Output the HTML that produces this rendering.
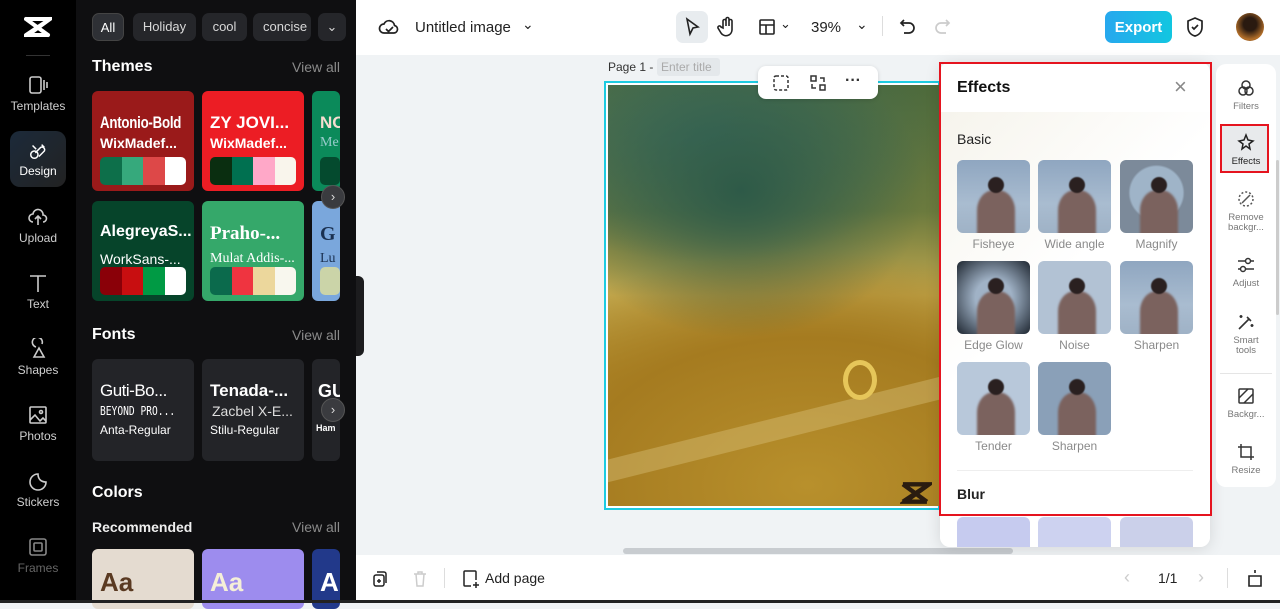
<!DOCTYPE html>
<html><head><meta charset="utf-8"><style>
*{box-sizing:border-box;margin:0;padding:0}
body{width:1280px;height:603px;overflow:hidden;font-family:"Liberation Sans",sans-serif;background:#f0f3f5;position:relative}
.abs{position:absolute}
.rail{left:0;top:0;width:76px;height:603px;background:#000}
.ri{position:absolute;left:0;width:76px;text-align:center;color:#cfcfcf;font-size:12px}
.ri svg{display:block;margin:0 auto 3px}
.panel{left:76px;top:0;width:280px;height:603px;background:#0f0f11;color:#fff}
.chip{position:absolute;top:13px;height:28px;border-radius:7px;background:#25262a;color:#d8d8d8;font-size:13px;line-height:28px;text-align:center}
.h{position:absolute;font-weight:bold;font-size:16px;color:#fff}
.va{position:absolute;right:16px;font-size:14px;color:#8a8a8a}
.card{position:absolute;width:102px;height:100px;border-radius:6px;overflow:hidden}
.card .t{position:absolute;left:8px;top:22px;font-weight:bold;font-size:17px;white-space:nowrap}
.card .s{position:absolute;left:8px;top:50px;font-size:14px;white-space:nowrap}
.sw{position:absolute;left:8px;top:66px;width:86px;height:28px;border-radius:5px;overflow:hidden;display:flex}
.sw i{flex:1}
.fc{position:absolute;top:359px;width:102px;height:102px;border-radius:6px;background:#232428;color:#fff;overflow:hidden}
.fc div{white-space:nowrap}
.arrow{position:absolute;width:24px;height:24px;border-radius:50%;background:#3a3b3f;border:1px solid #555;color:#ddd;font-size:13px;text-align:center;line-height:22px}
.top{left:356px;top:0;width:924px;height:55px;background:#fff}
.bot{left:356px;top:555px;width:924px;height:45px;background:#fff}
.thumb{position:absolute;width:73px;height:73px;border-radius:6px;overflow:hidden;background:linear-gradient(180deg,#8fa6c0,#a9bcd0 60%,#9fb2c6)}
.thumb:after{content:"";position:absolute;left:20px;top:30px;width:38px;height:45px;border-radius:45% 45% 0 0;background:#7b625e;filter:blur(1px)}
.thumb:before{content:"";position:absolute;left:31px;top:17px;width:16px;height:16px;border-radius:50%;background:#2a2020;z-index:2;filter:blur(.5px)}
.lbl{position:absolute;width:73px;text-align:center;font-size:12px;color:#8a8a8a}
.rr{position:absolute;left:1216px;width:60px;text-align:center;font-size:9.5px;color:#777;line-height:10px}
.rr svg{display:block;margin:0 auto 4px}
</style></head><body>
<div class="abs rail">
  <svg class="abs" style="left:24px;top:16px" width="28" height="22" viewBox="0 0 28 22"><path d="M2 3 L26 3 L4 19 L24 19 M2 19 L26 3 M2 3 L24 19" stroke="#fff" stroke-width="4" fill="none" stroke-linecap="round"/></svg>
  <div class="abs" style="left:26px;top:55px;width:24px;height:1px;background:#333"></div>
  <div class="ri" style="top:74px"><svg width="22" height="22" viewBox="0 0 22 22" fill="none" stroke="#ccc" stroke-width="1.6"><rect x="3" y="3" width="11" height="16" rx="2"/><path d="M17 6v10M20 8v6"/></svg>Templates</div>
  <div class="abs" style="left:10px;top:131px;width:56px;height:56px;border-radius:10px;background:linear-gradient(135deg,#1c2a3a,#222)"></div>
  <div class="ri" style="top:141px;color:#fff"><svg width="22" height="20" viewBox="0 0 22 22" fill="none" stroke="#fff" stroke-width="1.6"><circle cx="7" cy="15" r="4"/><path d="M5 5l4 4M12 17l6-6a3 3 0 0 0-4-4l-6 6M15 4l3 3"/></svg>Design</div>
  <div class="ri" style="top:206px"><svg width="22" height="22" viewBox="0 0 22 22" fill="none" stroke="#ccc" stroke-width="1.6"><path d="M6 16a4 4 0 0 1 0-8 5 5 0 0 1 10 1 3.5 3.5 0 0 1 0 7M11 19v-8M8 13l3-3 3 3"/></svg>Upload</div>
  <div class="ri" style="top:272px"><svg width="22" height="22" viewBox="0 0 22 22" fill="none" stroke="#ccc" stroke-width="1.6"><path d="M3 4h16M11 4v16"/></svg>Text</div>
  <div class="ri" style="top:338px"><svg width="22" height="22" viewBox="0 0 22 22" fill="none" stroke="#ccc" stroke-width="1.6"><path d="M9 9 a5 5 0 1 1 6-3M7 19l5-9 5 9z"/></svg>Shapes</div>
  <div class="ri" style="top:404px"><svg width="22" height="22" viewBox="0 0 22 22" fill="none" stroke="#ccc" stroke-width="1.6"><rect x="3" y="3" width="16" height="16" rx="1"/><path d="M3 16l5-5 5 6 3-3 3 3"/><circle cx="14" cy="8" r="1.5"/></svg>Photos</div>
  <div class="ri" style="top:470px"><svg width="22" height="22" viewBox="0 0 22 22" fill="none" stroke="#ccc" stroke-width="1.6"><path d="M19 12a8 8 0 1 1-8-8c0 5 3 8 8 8z"/></svg>Stickers</div>
  <div class="ri" style="top:536px;color:#666"><svg width="22" height="22" viewBox="0 0 22 22" fill="none" stroke="#888" stroke-width="1.6"><rect x="3" y="3" width="16" height="16" rx="2"/><rect x="7" y="7" width="8" height="8" rx="1"/></svg>Frames</div>
</div>

<div class="abs panel">
  <div class="chip" style="left:16px;width:32px;background:#2e3035;border:1px solid #444;color:#fff">All</div>
  <div class="chip" style="left:57px;width:63px">Holiday</div>
  <div class="chip" style="left:126px;width:45px">cool</div>
  <div class="chip" style="left:177px;width:58px;text-align:left;padding-left:10px;overflow:hidden">concise</div>
  <div class="chip" style="left:242px;width:28px">⌄</div>
  <div class="h" style="left:16px;top:58px">Themes</div><div class="va" style="top:59px">View all</div>
  <div class="card" style="left:16px;top:91px;background:#9a1a1a;color:#fff"><div class="t" style="font-size:17px;transform:scaleX(.78);transform-origin:left;letter-spacing:-.3px">Antonio-Bold</div><div class="s" style="top:44px;font-weight:bold">WixMadef...</div><div class="sw"><i style="background:#0d6f4a"></i><i style="background:#36a97c"></i><i style="background:#dd4848"></i><i style="background:#fff"></i></div></div>
  <div class="card" style="left:126px;top:91px;background:#ec1d24;color:#fff"><div class="t">ZY JOVI...</div><div class="s" style="top:44px;font-weight:bold">WixMadef...</div><div class="sw"><i style="background:#0a2e10"></i><i style="background:#007050"></i><i style="background:#ffa8c8"></i><i style="background:#f9f5ec"></i></div></div>
  <div class="card" style="left:236px;top:91px;width:28px;background:#0b8a5a;color:#f5ddd0"><div class="t">NO</div><div class="s" style="top:44px;font-family:serif;color:#9cc">Me</div><div class="sw" style="width:20px"><i style="background:#044a2e"></i></div></div>
  <div class="card" style="left:16px;top:201px;background:#06442a;color:#fff"><div class="t" style="font-size:16px">AlegreyaS...</div><div class="s">WorkSans-...</div><div class="sw"><i style="background:#8a0008"></i><i style="background:#c80e10"></i><i style="background:#009a44"></i><i style="background:#fff"></i></div></div>
  <div class="card" style="left:126px;top:201px;background:#35a86a;color:#fff"><div class="t" style="font-family:'Liberation Serif',serif;font-size:19px">Praho-...</div><div class="s" style="font-family:'Liberation Serif',serif">Mulat Addis-...</div><div class="sw"><i style="background:#0b6a4c"></i><i style="background:#ef3440"></i><i style="background:#ecd79c"></i><i style="background:#f8f7ee"></i></div></div>
  <div class="card" style="left:236px;top:201px;width:28px;background:#7aa7dc;color:#1a3050"><div class="t" style="font-family:serif;font-size:20px">G</div><div class="s" style="font-family:serif">Lu</div><div class="sw" style="width:20px"><i style="background:#cbd4a8"></i></div></div>
  <div class="arrow" style="left:245px;top:185px">›</div>
  <div class="h" style="left:16px;top:326px">Fonts</div><div class="va" style="top:327px">View all</div>
  <div class="fc" style="left:16px"><div style="position:absolute;left:8px;top:22px;font-size:17px;letter-spacing:-.5px">Guti-Bo...</div><div style="position:absolute;left:8px;top:45px;font-size:12px;font-family:'DejaVu Sans Mono',monospace;transform:scaleX(.8);transform-origin:left">BEYOND PRO...</div><div style="position:absolute;left:8px;top:64px;font-size:12px">Anta-Regular</div></div>
  <div class="fc" style="left:126px"><div style="position:absolute;left:8px;top:22px;font-size:17px;font-weight:bold">Tenada-...</div><div style="position:absolute;left:10px;top:44px;font-size:14px;color:#ddd">Zacbel X-E...</div><div style="position:absolute;left:8px;top:64px;font-size:12px">Stilu-Regular</div></div>
  <div class="fc" style="left:236px;width:28px"><div style="position:absolute;left:6px;top:22px;font-size:18px;font-weight:bold">GU</div><div style="position:absolute;left:4px;top:64px;font-size:9px;font-weight:bold">Ham</div></div>
  <div class="arrow" style="left:245px;top:398px">›</div>
  <div class="h" style="left:16px;top:484px">Colors</div>
  <div style="position:absolute;left:16px;top:519px;font-size:14px;font-weight:bold;color:#eee">Recommended</div><div class="va" style="top:519px">View all</div>
  <div class="card" style="left:16px;top:549px;height:60px;background:#e4dbd0;color:#5a3a22"><div class="t" style="top:18px;font-size:26px">Aa</div></div>
  <div class="card" style="left:126px;top:549px;height:60px;background:#9d8cee;color:#f5efd8"><div class="t" style="top:18px;font-size:26px">Aa</div></div>
  <div class="card" style="left:236px;top:549px;width:28px;height:60px;background:#22398a;color:#fff"><div class="t" style="top:18px;font-size:26px">A</div></div>
</div>
<div class="abs" style="left:356px;top:276px;width:8px;height:80px;background:#1c1c1e;border-radius:0 6px 6px 0"></div>

<div class="abs top">
  <svg class="abs" style="left:22px;top:17px" width="22" height="20" viewBox="0 0 22 20" fill="none" stroke="#222" stroke-width="1.7"><path d="M6 16a4.5 4.5 0 0 1 0-9 5.5 5.5 0 0 1 10.5 1.5A3.8 3.8 0 0 1 16 16zM8 12l2.5 2.5L15 10"/></svg>
  <div class="abs" style="left:59px;top:19px;font-size:15px;color:#222">Untitled image</div>
  <div class="abs" style="left:166px;top:16px;font-size:14px;color:#222">⌄</div>
  <div class="abs" style="left:320px;top:11px;width:32px;height:32px;border-radius:7px;background:#e8ecef"></div>
  <svg class="abs" style="left:327px;top:17px" width="18" height="20" viewBox="0 0 18 20" fill="none" stroke="#222" stroke-width="1.6"><path d="M4 2l11 8-5 1-3 6z"/></svg>
  <svg class="abs" style="left:361px;top:16px" width="20" height="22" viewBox="0 0 20 22" fill="none" stroke="#222" stroke-width="1.6"><path d="M6 12V5a1.5 1.5 0 0 1 3 0v5V3a1.5 1.5 0 0 1 3 0v7V5a1.5 1.5 0 0 1 3 0v9a6 6 0 0 1-11 3l-3-5a1.5 1.5 0 0 1 3-1z"/></svg>
  <svg class="abs" style="left:402px;top:18px" width="18" height="18" viewBox="0 0 18 18" fill="none" stroke="#222" stroke-width="1.6"><rect x="2" y="2" width="14" height="14" rx="1"/><path d="M2 7h14M8 7v9"/></svg>
  <div class="abs" style="left:424px;top:16px;font-size:13px;color:#222">⌄</div>
  <div class="abs" style="left:455px;top:19px;font-size:15px;color:#222">39%</div>
  <div class="abs" style="left:500px;top:16px;font-size:14px;color:#222">⌄</div>
  <div class="abs" style="left:526px;top:16px;width:1px;height:20px;background:#ddd"></div>
  <svg class="abs" style="left:543px;top:17px" width="18" height="20" viewBox="0 0 18 20" fill="none" stroke="#222" stroke-width="1.7"><path d="M5 3L2 6l3 3M2 6h8a5 5 0 0 1 0 10H5"/></svg>
  <svg class="abs" style="left:577px;top:17px" width="18" height="20" viewBox="0 0 18 20" fill="none" stroke="#ccc" stroke-width="1.7"><path d="M13 3l3 3-3 3M16 6H8a5 5 0 0 0 0 10h5"/></svg>
  <div class="abs" style="left:749px;top:11px;width:67px;height:32px;border-radius:7px;background:linear-gradient(90deg,#27a8ee,#12c6e0);color:#fff;font-weight:bold;font-size:15px;display:flex;align-items:center;justify-content:center">Export</div>
  <svg class="abs" style="left:830px;top:16px" width="18" height="22" viewBox="0 0 18 22" fill="none" stroke="#222" stroke-width="1.7"><path d="M9 2l7 3v6c0 5-3 8-7 9-4-1-7-4-7-9V5zM6 11l2 2 4-4"/></svg>
  <div class="abs" style="left:880px;top:13px;width:28px;height:28px;border-radius:50%;background:radial-gradient(circle at 50% 40%,#2a1a10 30%,#b4702a 70%,#5a3010)"></div>
</div>

<!-- canvas -->
<div class="abs" style="left:608px;top:60px;font-size:12px;color:#333">Page 1 -</div>
<div class="abs" style="left:657px;top:58px;width:63px;height:18px;background:#e4e8eb;border-radius:3px;font-size:12px;color:#aaa;padding:2px 4px">Enter title</div>
<div class="abs" style="left:604px;top:81px;width:336px;height:429px;border:2px solid #1ecbe1;background:#fff"></div>
<div class="abs" style="left:608px;top:85px;width:332px;height:421px;overflow:hidden;background:
radial-gradient(ellipse 55% 35% at 40% 25%,#2e5a48,rgba(46,90,72,0) 100%),
radial-gradient(ellipse 70% 30% at 30% 12%,#3f6d5c,rgba(63,109,92,0) 100%),
radial-gradient(ellipse 140% 70% at 60% 95%,#b8902c,#a57b20 50%,rgba(165,123,32,0) 80%),
linear-gradient(180deg,#4d6a3c 0%,#6b7a3e 30%,#c2a84e 50%,#b08a2a 70%,#c49a36 100%)">
  <div style="position:absolute;left:-20px;top:330px;width:400px;height:22px;transform:rotate(-14deg);background:rgba(225,205,140,.35)"></div>
  <div style="position:absolute;left:235px;top:275px;width:34px;height:40px;border:5px solid #e6c65a;border-radius:50%"></div>
</div>
<svg class="abs" style="left:900px;top:481px" width="32" height="24" viewBox="0 0 28 22"><path d="M2 3 L26 3 L4 19 L24 19 M2 19 L26 3 M2 3 L24 19" stroke="#2a1c10" stroke-width="4" fill="none"/></svg>
<div class="abs" style="left:758px;top:66px;width:120px;height:33px;background:#fff;border-radius:8px;box-shadow:0 1px 4px rgba(0,0,0,.15)"></div>
<svg class="abs" style="left:772px;top:74px" width="18" height="18" viewBox="0 0 18 18" fill="none" stroke="#333" stroke-width="1.5" stroke-dasharray="3 2"><rect x="2" y="2" width="14" height="14" rx="2"/></svg>
<svg class="abs" style="left:809px;top:74px" width="18" height="18" viewBox="0 0 18 18" fill="none" stroke="#333" stroke-width="1.5"><rect x="2" y="2" width="5" height="5"/><rect x="11" y="11" width="5" height="5"/><path d="M11 4h4v4M7 14H3v-4"/></svg>
<div class="abs" style="left:845px;top:72px;font-size:16px;font-weight:bold;color:#333">···</div>
<div class="abs" style="left:623px;top:548px;width:390px;height:6px;border-radius:3px;background:#c8ccd0"></div>

<!-- effects panel -->
<div class="abs" style="left:940px;top:62px;width:270px;height:485px;background:#fff;border-radius:10px;box-shadow:0 2px 16px rgba(0,0,0,.12);overflow:hidden">
  <div style="position:absolute;left:0;top:50px;width:270px;height:450px;background:linear-gradient(135deg,#f6f4ec,#fff 40%)"></div>
  <div style="position:absolute;left:17px;top:17px;font-size:16px;font-weight:bold;color:#111">Effects</div>
  <div style="position:absolute;left:234px;top:12px;font-size:22px;color:#888;font-weight:300">×</div>
  <div style="position:absolute;left:17px;top:69px;font-size:14px;color:#222">Basic</div>
  <div class="thumb" style="left:17px;top:98px"></div><div class="lbl" style="left:17px;top:175px">Fisheye</div>
  <div class="thumb" style="left:98px;top:98px"></div><div class="lbl" style="left:98px;top:175px">Wide angle</div>
  <div class="thumb" style="left:180px;top:98px;background:radial-gradient(circle at 50% 45%,#9fb4c8 48%,#7c8a9a 52%)"></div><div class="lbl" style="left:180px;top:175px">Magnify</div>
  <div class="thumb" style="left:17px;top:199px;background:radial-gradient(circle,#a0b2c6 35%,#1e2630 100%)"></div><div class="lbl" style="left:17px;top:276px">Edge Glow</div>
  <div class="thumb" style="left:98px;top:199px;background:#b2c2d4"></div><div class="lbl" style="left:98px;top:276px">Noise</div>
  <div class="thumb" style="left:180px;top:199px"></div><div class="lbl" style="left:180px;top:276px">Sharpen</div>
  <div class="thumb" style="left:17px;top:300px;background:#b8c8da"></div><div class="lbl" style="left:17px;top:377px">Tender</div>
  <div class="thumb" style="left:98px;top:300px;background:#8aa0b8"></div><div class="lbl" style="left:98px;top:377px">Sharpen</div>
  <div style="position:absolute;left:17px;top:408px;width:236px;height:1px;background:#eee"></div>
  <div style="position:absolute;left:17px;top:424px;font-size:14px;font-weight:bold;color:#222">Blur</div>
  <div style="position:absolute;left:17px;top:455px;width:73px;height:40px;border-radius:6px;background:#c6cbef"></div>
  <div style="position:absolute;left:98px;top:455px;width:73px;height:40px;border-radius:6px;background:#cdd2f0"></div>
  <div style="position:absolute;left:180px;top:455px;width:73px;height:40px;border-radius:6px;background:#cbd0ea"></div>
</div>
<div class="abs" style="left:939px;top:62px;width:273px;height:454px;border:2px solid #e5141f"></div>

<!-- right rail -->
<div class="abs" style="left:1216px;top:64px;width:60px;height:423px;background:#fff;border-radius:10px"></div>
<div class="abs" style="left:1220px;top:124px;width:49px;height:49px;background:#e8eaec;border:2px solid #e5141f"></div>
<div class="rr" style="top:78px"><svg width="20" height="20" viewBox="0 0 20 20" fill="none" stroke="#333" stroke-width="1.5"><circle cx="10" cy="7" r="4"/><circle cx="7" cy="13" r="4"/><circle cx="13" cy="13" r="4"/></svg>Filters</div>
<div class="rr" style="top:133px;color:#222"><svg width="20" height="20" viewBox="0 0 20 20" fill="none" stroke="#222" stroke-width="1.5"><path d="M10 2l2 5 5 1-4 3 1 5-4-3-4 3 1-5-4-3 5-1z"/></svg>Effects</div>
<div class="rr" style="top:189px"><svg width="20" height="20" viewBox="0 0 20 20" fill="none" stroke="#555" stroke-width="1.5" stroke-dasharray="2 2"><circle cx="10" cy="10" r="7"/><path d="M6 14l8-8" stroke-dasharray="0"/></svg>Remove<br>backgr...</div>
<div class="rr" style="top:255px"><svg width="20" height="20" viewBox="0 0 20 20" fill="none" stroke="#333" stroke-width="1.5"><path d="M2 6h16M2 14h16"/><circle cx="12" cy="6" r="2.5" fill="#fff"/><circle cx="7" cy="14" r="2.5" fill="#fff"/></svg>Adjust</div>
<div class="rr" style="top:312px"><svg width="20" height="20" viewBox="0 0 20 20" fill="none" stroke="#333" stroke-width="1.6"><path d="M3 17L13 7M11 5l4 4M5 3v3M3.5 4.5h3M16 12v3M14.5 13.5h3"/></svg>Smart<br>tools</div>
<div class="abs" style="left:1220px;top:373px;width:52px;height:1px;background:#e5e5e5"></div>
<div class="rr" style="top:386px"><svg width="20" height="20" viewBox="0 0 20 20" fill="none" stroke="#333" stroke-width="1.5"><rect x="3" y="3" width="14" height="14" rx="1"/><path d="M3 12l9-9M8 17l9-9"/></svg>Backgr...</div>
<div class="rr" style="top:442px"><svg width="20" height="20" viewBox="0 0 20 20" fill="none" stroke="#333" stroke-width="1.5"><path d="M5 2v13h13M2 5h13v13"/></svg>Resize</div>
<div class="abs" style="left:1276px;top:160px;width:3px;height:155px;background:#ccc;border-radius:2px"></div>

<!-- bottom bar -->
<div class="abs bot">
  <svg class="abs" style="left:16px;top:15px" width="16" height="18" viewBox="0 0 16 18" fill="none" stroke="#222" stroke-width="1.5"><rect x="2" y="5" width="10" height="11" rx="2"/><path d="M5 2h7a2 2 0 0 1 2 2v9M7 9v4M5 11h4"/></svg>
  <svg class="abs" style="left:56px;top:15px" width="16" height="18" viewBox="0 0 16 18" fill="none" stroke="#ccc" stroke-width="1.5"><path d="M2 4h12M6 4V2h4v2M4 4l1 12h6l1-12"/></svg>
  <div class="abs" style="left:88px;top:13px;width:1px;height:20px;background:#ddd"></div>
  <svg class="abs" style="left:105px;top:14px" width="20" height="20" viewBox="0 0 20 20" fill="none" stroke="#222" stroke-width="1.5"><path d="M10 17H4a1 1 0 0 1-1-1V3a1 1 0 0 1 1-1h10a1 1 0 0 1 1 1v8M15 13v6M12 16h6"/></svg>
  <div class="abs" style="left:129px;top:15px;font-size:14px;color:#222">Add page</div>
  <div class="abs" style="left:768px;top:12px;font-size:18px;color:#ccc">‹</div>
  <div class="abs" style="left:802px;top:15px;font-size:14px;color:#222">1/1</div>
  <div class="abs" style="left:842px;top:12px;font-size:18px;color:#ccc">›</div>
  <div class="abs" style="left:871px;top:13px;width:1px;height:20px;background:#ddd"></div>
  <svg class="abs" style="left:890px;top:13px" width="18" height="20" viewBox="0 0 18 20" fill="none" stroke="#222" stroke-width="1.6"><path d="M9 2v3M5 8h8M3 8h12v10H3z"/></svg>
</div>
<div class="abs" style="left:0;top:600px;width:1280px;height:3px;background:#222"></div>
</body></html>
